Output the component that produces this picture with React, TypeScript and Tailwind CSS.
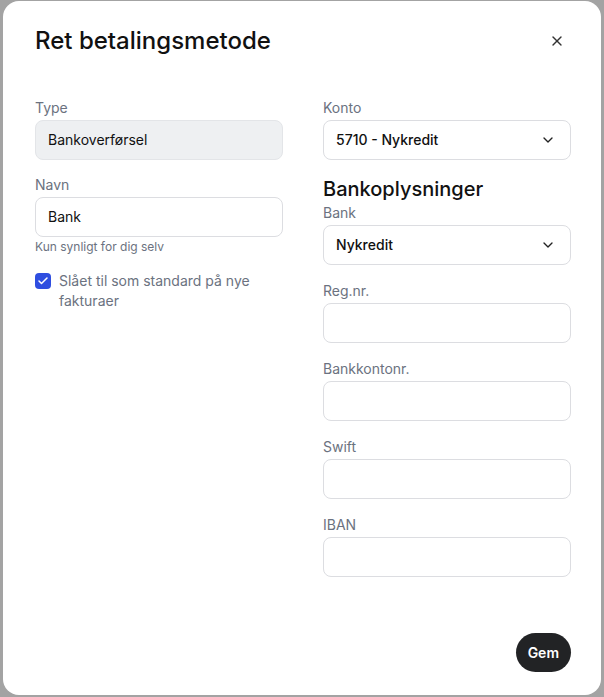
import React from 'react';
import { X, ChevronDown, Check } from 'lucide-react';

const Label: React.FC<{ children: React.ReactNode }> = ({ children }) => (
  <div className="text-sm leading-5 text-[#6b7280] mb-0.5">{children}</div>
);

const TextInput: React.FC<{ value?: string; disabled?: boolean }> = ({ value = '', disabled }) => (
  <div
    className={
      disabled
        ? 'h-10 rounded-lg border border-[#e3e5e8] bg-[#eef0f2] px-3 flex items-center text-sm text-[#111]'
        : 'h-10 rounded-lg border border-[#dcdde1] bg-white px-3 flex items-center text-sm text-[#111]'
    }
  >
    {value}
  </div>
);

const Select: React.FC<{ value: string }> = ({ value }) => (
  <div className="h-10 rounded-lg border border-[#dcdde1] bg-white pl-3 pr-3.5 flex items-center justify-between text-sm text-[#111] font-medium">
    <span>{value}</span>
    <ChevronDown className="h-4 w-4 text-[#222]" strokeWidth={2} />
  </div>
);

export default function App() {
  return (
    <div className="w-[604px] h-[697px] bg-[#a3a3a3] pt-px pl-[3px] font-['Inter',sans-serif]">
      <div className="w-[598px] h-[694px] bg-white rounded-2xl flex flex-col pl-8 pr-[30px] pt-6 pb-[23px]">
        {/* Header */}
        <div className="flex items-center justify-between">
          <h2 className="text-2xl leading-8 font-medium text-[#111]">Ret betalingsmetode</h2>
          <button className="mr-1.5 text-[#333]">
            <X className="h-4 w-4" strokeWidth={2} />
          </button>
        </div>

        <div className="mt-[41px] grid grid-cols-2 gap-10">
          {/* Left column */}
          <div className="flex flex-col">
            <Label>Type</Label>
            <TextInput value="Bankoverførsel" disabled />
            <div className="mt-[15px]">
              <Label>Navn</Label>
              <TextInput value="Bank" />
              <div className="mt-[2px] text-xs leading-4 text-[#6b7280]">Kun synligt for dig selv</div>
            </div>
            <div className="mt-4 flex gap-2">
              <div className="mt-0.5 h-4 w-4 shrink-0 rounded bg-[#2f4ee0] flex items-center justify-center">
                <Check className="h-3 w-3 text-white" strokeWidth={3} />
              </div>
              <div className="text-sm leading-5 text-[#6b7280]">Slået til som standard på nye fakturaer</div>
            </div>
          </div>

          {/* Right column */}
          <div className="flex flex-col">
            <Label>Konto</Label>
            <Select value="5710 - Nykredit" />
            <h3 className="mt-[15px] text-xl leading-7 font-medium text-[#111]">Bankoplysninger</h3>
            <Label>Bank</Label>
            <Select value="Nykredit" />
            <div className="mt-4">
              <Label>Reg.nr.</Label>
              <TextInput />
            </div>
            <div className="mt-4">
              <Label>Bankkontonr.</Label>
              <TextInput />
            </div>
            <div className="mt-4">
              <Label>Swift</Label>
              <TextInput />
            </div>
            <div className="mt-4">
              <Label>IBAN</Label>
              <TextInput />
            </div>
          </div>
        </div>

        <div className="mt-auto flex justify-end">
          <button className="h-[39px] px-3 rounded-full bg-[#222325] text-white text-sm font-semibold">Gem</button>
        </div>
      </div>
    </div>
  );
}
